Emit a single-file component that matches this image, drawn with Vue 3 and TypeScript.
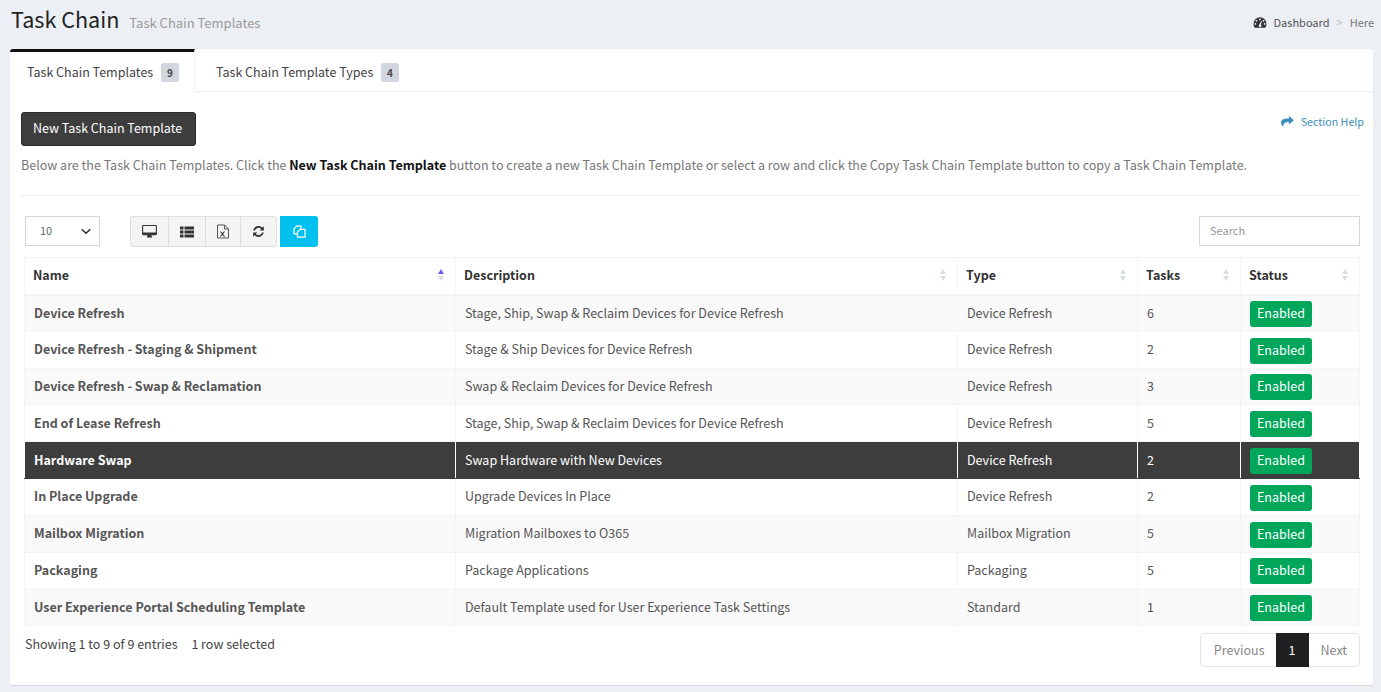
<template>
  <div class="page">
    <header class="page-head">
      <div class="titles">
        <h1>Task Chain</h1>
        <small>Task Chain Templates</small>
      </div>
      <div class="crumbs">
        <svg class="gauge" viewBox="0 0 16 14" width="14" height="13">
          <path fill="#333" fill-rule="evenodd" d="M8 1a7.5 7.5 0 0 0-7.5 7.5c0 1.700.6 3.300 1.500 4.500h12c.9-1.200 1.500-2.800 1.500-4.500A7.500 7.500 0 0 0 8 1zM8 2.300a1.100 1.100 0 1 1 0 2.200 1.100 1.100 0 0 1 0-2.200zM4 4a1.100 1.100 0 1 1 0 2.200A1.100 1.100 0 0 1 4 4zm8 0a1.100 1.100 0 1 1 0 2.200A1.100 1.100 0 0 1 12 4zM2.600 7.500a1.100 1.100 0 1 1 0 2.200 1.100 1.100 0 0 1 0-2.200zm10.800 0a1.100 1.100 0 1 1 0 2.200 1.100 1.100 0 0 1 0-2.200zM9.300 5.300l.8.300-1 4a1.500 1.500 0 1 1-2 0z" />
        </svg>
        <span class="crumb-link">Dashboard</span>
        <span class="crumb-sep">&gt;</span>
        <span class="crumb-here">Here</span>
      </div>
    </header>

    <section class="card">
      <nav class="tabs">
        <div class="tab active">Task Chain Templates <span class="count">9</span></div>
        <div class="tab">Task Chain Template Types <span class="count">4</span></div>
      </nav>

      <div class="body">
        <div class="action-row">
          <button class="btn-new">New Task Chain Template</button>
          <a class="help">
            <svg viewBox="0 0 14 12" width="13" height="11">
              <path fill="#3c8dbc" d="M8.500 0 14 4.700 8.500 9.400V6.600C5 6.500 2.800 7.400 2.300 11.500 0.700 10.300 0 8.600 0 7c0-3.600 3.800-4.300 8.500-4.300z" />
            </svg>
            Section Help
          </a>
        </div>
        <p class="intro">
          Below are the Task Chain Templates. Click the <b>New Task Chain Template</b> button to create a new Task Chain Template or select a row and click the Copy Task Chain Template button to copy a Task Chain Template.
        </p>
        <hr />

        <div class="toolbar">
          <div class="length">
            <span>10</span>
            <svg viewBox="0 0 12 8" width="10" height="7"><path d="M1 1.500 6 6.200l5-4.700" fill="none" stroke="#333" stroke-width="1.800" /></svg>
          </div>
          <div class="tool-group">
            <button class="tool">
              <svg viewBox="0 0 16 14" width="15" height="13"><path fill="#333" fill-rule="evenodd" d="M1.200 0h13.600c.7 0 1.200.5 1.200 1.200v8.600c0 .7-.5 1.200-1.200 1.200H10c0 .8.4 1.300.8 1.500v1H5.200v-1c.4-.2.800-.7.800-1.500H1.200C.5 11 0 10.500 0 9.800V1.200C0 .5.500 0 1.200 0zM1.200 1.200v7h13.600v-7z" /></svg>
            </button>
            <button class="tool wide">
              <svg viewBox="0 0 14 12" width="14" height="12"><path fill="#333" d="M0 .5h3.500v3H0zM4.500.5H14v3H4.500zM0 4.500h3.500v3H0zM4.500 4.500H14v3H4.500zM0 8.500h3.500v3H0zM4.500 8.500H14v3H4.500z" /></svg>
            </button>
            <button class="tool narrow">
              <svg viewBox="0 0 12 14" width="12" height="15"><path fill="none" stroke="#555" stroke-width="1" d="M.5.500h7l4 4v9H.500zM7.500.5v4h4" /><path fill="none" stroke="#333" stroke-width="1.200" d="M3.500 7l4 5M7.500 7l-4 5" /></svg>
            </button>
            <button class="tool narrow">
              <svg viewBox="0 0 14 14" width="13" height="13"><path fill="#333" d="M7 1.200c1.700 0 3.200.7 4.200 1.800L12.800 1.400V6H8.200l1.700-1.700A4 4 0 0 0 3.200 6H1.300A5.800 5.800 0 0 1 7 1.200zM1.200 8h4.600l-1.700 1.700A4 4 0 0 0 10.800 8h1.900A5.800 5.800 0 0 1 2.800 11l-1.600 1.600z" /></svg>
            </button>
          </div>
          <button class="tool-copy">
            <svg viewBox="0 0 14 14" width="13" height="13">
              <path fill="none" stroke="#fff" stroke-width="1.300" d="M4.800 9.600H1V4.400L4 1.200h4.600V4.600M4.800 13V7.800L7.800 4.600H13V13z" />
            </svg>
          </button>
          <input class="search" placeholder="Search" />
        </div>

        <table>
          <colgroup>
            <col v-for="w in colWidths" :key="w" :style="{ width: w + 'px' }" />
          </colgroup>
          <thead>
            <tr>
              <th v-for="(c, i) in columns" :key="c">
                {{ c }}
                <span class="sort">
                  <i class="up" :class="{ on: i === 0 }"></i>
                  <i class="down"></i>
                </span>
              </th>
            </tr>
          </thead>
          <tbody>
            <tr v-for="(r, i) in rows" :key="r.name" :class="{ odd: i % 2 === 0, selected: r.name === selectedName }">
              <td class="name">{{ r.name }}</td>
              <td>{{ r.description }}</td>
              <td>{{ r.type }}</td>
              <td>{{ r.tasks }}</td>
              <td class="status-cell"><span class="status">Enabled</span></td>
            </tr>
          </tbody>
        </table>

        <div class="table-foot">
          <div class="info">Showing 1 to 9 of 9 entries <span class="sel">1 row selected</span></div>
          <div class="pager">
            <span class="pg prev">Previous</span>
            <span class="pg current">1</span>
            <span class="pg">Next</span>
          </div>
        </div>
      </div>
    </section>
  </div>
</template>

<script setup lang="ts">
interface Row {
  name: string;
  description: string;
  type: string;
  tasks: number;
}

const columns = ["Name", "Description", "Type", "Tasks", "Status"];
const colWidths = [431, 502, 180, 103, 119];
const selectedName = "Hardware Swap";

const rows: Row[] = [
  { name: "Device Refresh", description: "Stage, Ship, Swap & Reclaim Devices for Device Refresh", type: "Device Refresh", tasks: 6 },
  { name: "Device Refresh - Staging & Shipment", description: "Stage & Ship Devices for Device Refresh", type: "Device Refresh", tasks: 2 },
  { name: "Device Refresh - Swap & Reclamation", description: "Swap & Reclaim Devices for Device Refresh", type: "Device Refresh", tasks: 3 },
  { name: "End of Lease Refresh", description: "Stage, Ship, Swap & Reclaim Devices for Device Refresh", type: "Device Refresh", tasks: 5 },
  { name: "Hardware Swap", description: "Swap Hardware with New Devices", type: "Device Refresh", tasks: 2 },
  { name: "In Place Upgrade", description: "Upgrade Devices In Place", type: "Device Refresh", tasks: 2 },
  { name: "Mailbox Migration", description: "Migration Mailboxes to O365", type: "Mailbox Migration", tasks: 5 },
  { name: "Packaging", description: "Package Applications", type: "Packaging", tasks: 5 },
  { name: "User Experience Portal Scheduling Template", description: "Default Template used for User Experience Task Settings", type: "Standard", tasks: 1 },
];
</script>

<style>
html,
body {
  margin: 0;
  background: #ecf0f5;
}
</style>

<style scoped>
.page {
  height: 692px;
  box-sizing: border-box;
  padding: 0 8px 0 10px;
  overflow: hidden;
  background: #ecf0f5;
  color: #333;
  font-family: "Noto Sans CJK SC", "Liberation Sans", sans-serif;
  font-size: 12.530px;
}
.page-head {
  height: 49px;
  display: flex;
  justify-content: space-between;
  align-items: flex-start;
  padding-top: 3px;
  box-sizing: border-box;
}
.titles {
  display: flex;
  align-items: baseline;
  gap: 10px;
  padding-left: 1px;
}
h1 {
  margin: 0;
  font-size: 21.600px;
  line-height: 32px;
  font-weight: 400;
  color: #222;
}
small {
  font-size: 13px;
  color: #999;
}
.crumbs {
  display: flex;
  align-items: center;
  font-size: 11px;
  line-height: 18px;
  padding-top: 10px;
  margin-right: -1px;
  color: #555;
}
.gauge {
  margin-right: 7px;
}
.crumb-sep {
  margin: 0 7px;
  color: #bbb;
}
.crumb-here {
  color: #777;
}
.card {
  height: 636px;
  background: #fff;
  border-radius: 3px;
  box-shadow: 0 1px 1px rgba(0, 0, 0, 0.1);
}
.tabs {
  display: flex;
  height: 42px;
  border-bottom: 1px solid #f0f0f0;
}
.tab {
  padding: 0 17px 0 16px;
  line-height: 42px;
  height: 42px;
  box-sizing: border-box;
  color: #444;
  white-space: nowrap;
  margin-top: 2px;
}
.tab + .tab {
  padding-left: 21px;
}
.tab.active {
  width: 185px;
  margin-top: 0;
  height: 43px;
  line-height: 40px;
  padding: 0 0 0 17px;
  background: #fff;
  border-top: 3px solid #111;
  border-right: 1px solid #f0f0f0;
  border-top-left-radius: 3px;
}
.count {
  display: inline-block;
  min-width: 18px;
  margin-left: 5px;
  height: 19px;
  line-height: 19px;
  text-align: center;
  border-radius: 2px;
  background: #d2d6de;
  color: #444;
  font-size: 10px;
  font-weight: 700;
}
.body {
  padding: 20px 13px 0 11px;
}
.action-row {
  display: flex;
  justify-content: space-between;
}
.btn-new {
  width: 175px;
  height: 34px;
  padding: 0 2px 2px 0;
  border: 1px solid #2a2a2a;
  border-radius: 3px;
  background: #3d3d3d;
  color: #fff;
  font: inherit;
  line-height: 20px;
}
.help {
  display: flex;
  align-items: center;
  gap: 7px;
  height: 20px;
  margin: -1px -4px 0 0;
  font-size: 10.700px;
  color: #3c8dbc;
}
.intro {
  margin: 9px 0 0;
  line-height: 20px;
  color: #777;
  white-space: nowrap;
}
.intro b {
  color: #111;
}
hr {
  margin: 20px 0 20px;
  border: 0;
  border-top: 1px solid #eee;
}
.toolbar {
  display: flex;
  align-items: flex-start;
  height: 31px;
  padding: 0 0 0 4px;
}
.length {
  width: 75px;
  height: 30px;
  box-sizing: border-box;
  border: 1px solid #d2d6de;
  padding: 0 8px 2px 14px;
  display: flex;
  align-items: center;
  justify-content: space-between;
  font-size: 11px;
  color: #666;
}
.length svg {
  margin-top: 2px;
}
.tool-group {
  display: flex;
  margin-left: 30px;
  height: 31px;
  box-sizing: border-box;
  border: 1px solid #ddd;
  border-radius: 3px;
  background: #f4f4f4;
}
.tool {
  width: 38px;
  height: 29px;
  padding: 0;
  border: 0;
  border-right: 1px solid #ddd;
  background: transparent;
  display: flex;
  align-items: center;
  justify-content: center;
}
.tool.wide {
  width: 37px;
}
.tool.narrow {
  width: 35px;
}
.tool.narrow:last-child {
  width: 35px;
  border-right: 0;
}
.tool-copy {
  width: 38px;
  height: 31px;
  margin-left: 3px;
  padding: 0;
  border: 0;
  border-radius: 0 3px 3px 0;
  background: #00c0ef;
  display: flex;
  align-items: center;
  justify-content: center;
}
.search {
  width: 161px;
  height: 30px;
  box-sizing: border-box;
  margin-left: auto;
  padding: 0 10px 3px;
  border: 1px solid #d2d6de;
  outline: none;
  font: inherit;
  font-size: 11px;
}
.search::placeholder {
  color: #999;
}
table {
  width: 1335px;
  margin: 10px 0 0 3px;
  border-collapse: collapse;
  table-layout: fixed;
  border: 1px solid #f4f4f4;
}
th {
  position: relative;
  height: 37px;
  box-sizing: border-box;
  padding: 0 8px 3px;
  text-align: left;
  font-weight: 700;
  color: #333;
  border: 1px solid #f4f4f4;
  border-bottom-width: 2px;
}
td {
  height: 36.800px;
  box-sizing: border-box;
  padding: 0 8px 2px 9px;
  color: #555;
  border: 1px solid #f4f4f4;
}
td.name {
  font-weight: 700;
}
td.status-cell {
  padding: 2px 8px 0 9px;
}
tr.odd td {
  background: #f9f9f9;
}
tr.selected td {
  background: #3d3d3d;
  color: #fff;
  border-color: #3d3d3d #fff;
}
.sort {
  position: absolute;
  right: 11px;
  top: 11px;
  display: flex;
  flex-direction: column;
  gap: 2px;
}
.sort i {
  width: 0;
  height: 0;
  border-left: 3px solid transparent;
  border-right: 3px solid transparent;
}
.sort .up {
  border-bottom: 5px solid #d8dbe0;
}
.sort .up.on {
  border-bottom-color: #6a5cf0;
}
.sort .down {
  border-top: 5px solid #d8dbe0;
}
.status {
  display: inline-block;
  width: 62px;
  height: 26px;
  line-height: 23px;
  text-align: center;
  border-radius: 3px;
  background: #00a65a;
  color: #fff;
  vertical-align: middle;
}
.table-foot {
  display: flex;
  justify-content: space-between;
  align-items: flex-start;
  padding-left: 4px;
}
.info {
  margin-top: 8px;
  line-height: 20px;
  color: #444;
}
.sel {
  margin-left: 11px;
}
.pager {
  display: flex;
  margin-top: 7px;
  height: 34px;
  box-sizing: border-box;
  border: 1px solid #e4e4e4;
  border-radius: 4px;
  color: #888;
}
.pg {
  padding: 0 12px;
  line-height: 31px;
}
.pg.prev {
  padding: 0 11px 0 13px;
}
.pg.current {
  margin: -1px 0;
  width: 33px;
  padding: 0;
  box-sizing: border-box;
  text-align: center;
  line-height: 33px;
  background: #1f2022;
  color: #fff;
}
</style>
